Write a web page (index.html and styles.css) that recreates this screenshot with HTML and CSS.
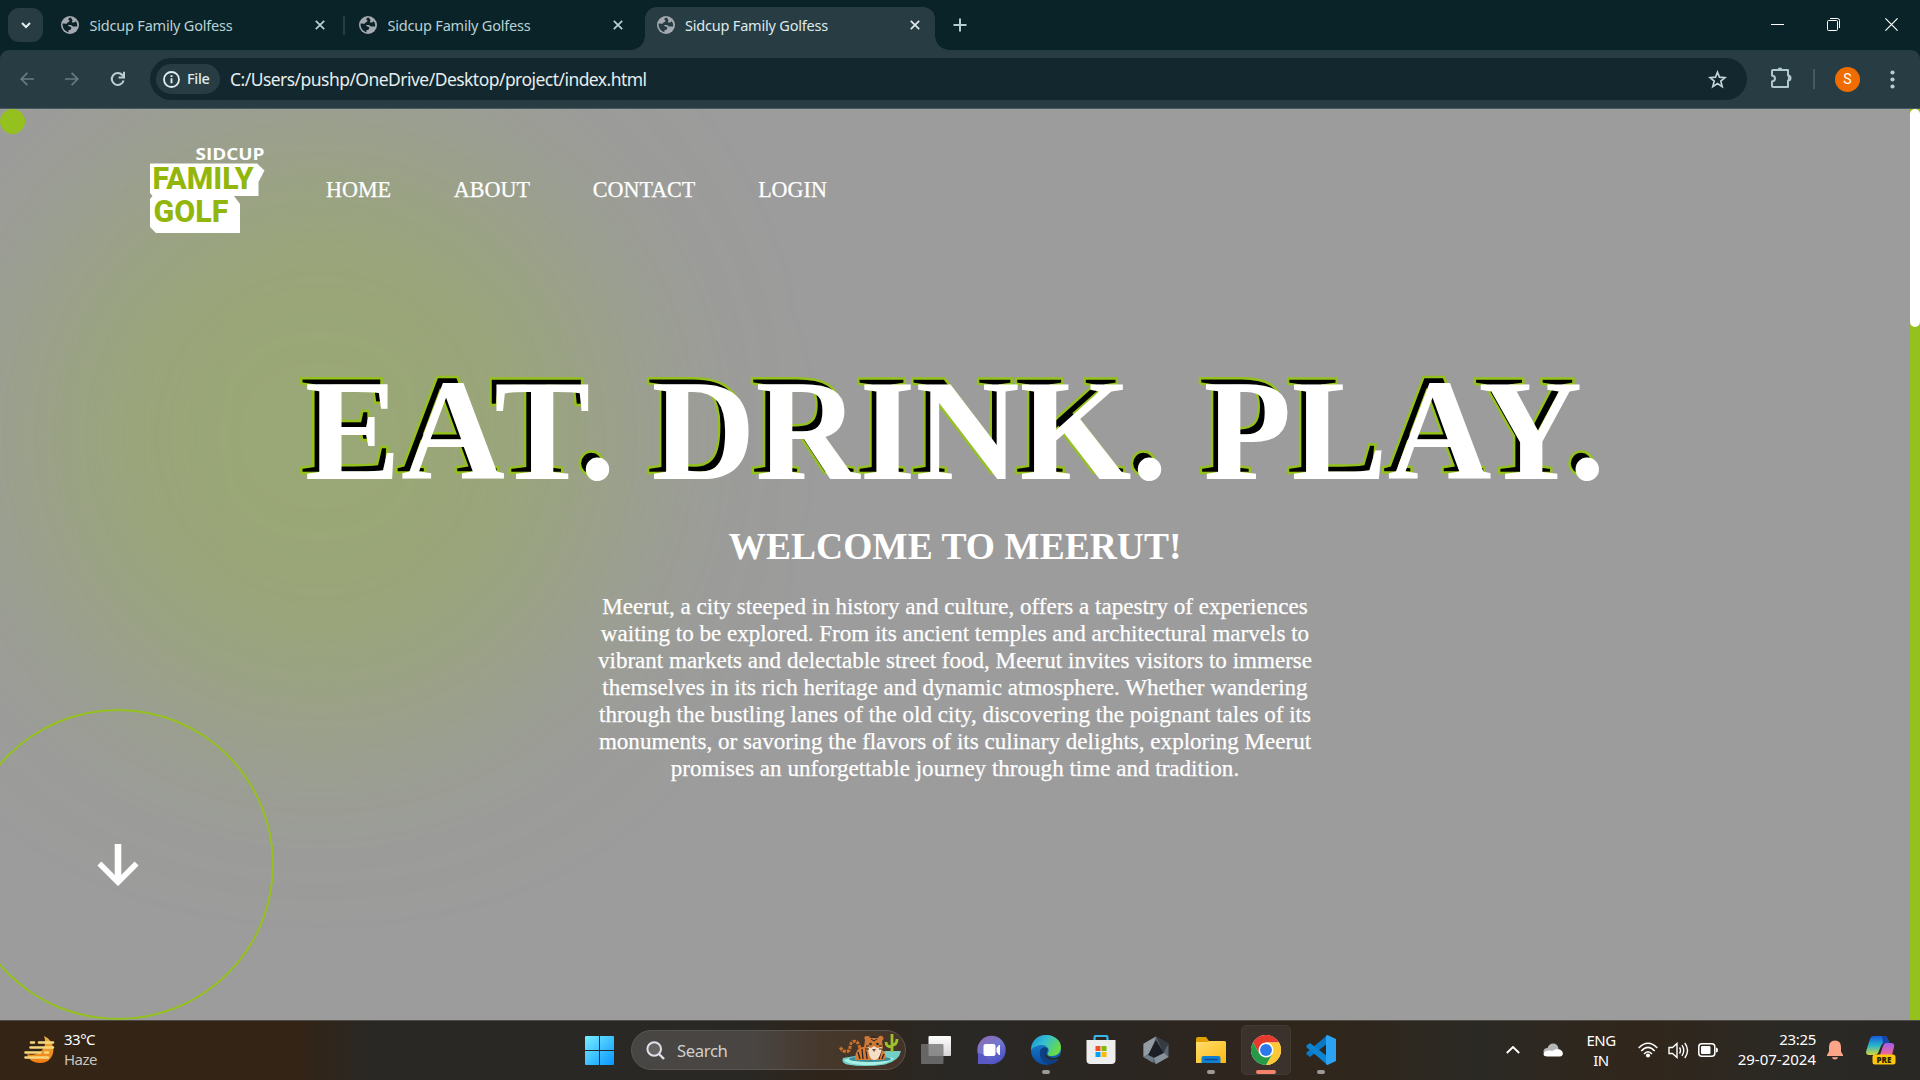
FILE: index.html
```html
<!DOCTYPE html>
<html lang="en">
<head>
<meta charset="utf-8">
<title>Sidcup Family Golfess</title>
<link rel="stylesheet" href="styles.css">
</head>
<body>
<svg class="defs" width="0" height="0">
  <symbol id="globe" viewBox="0 0 18 18"><circle cx="9" cy="9" r="9" fill="#a5a9b0"/><path d="M9.600 1.400C6.600 2.200 7 4 8.600 4.500c-.3 2-2.600 1.400-2.800 3.200L1.600 7.600C1.200 12 4 15.600 7.400 16.200l.2-2.200c1.800 0 2.800-.8 2.700-2.600-1-1.200-2.600-.8-3.500-2.200 2-.6 4.200-.4 5.200 1.300l4 .1c.7-2-.3-4.200-1.500-5.300-1 1.800-3.400 1.600-3.700.1 1.600-1 .2-2.400-1.200-4Z" fill="var(--hole)"/></symbol>
  <symbol id="cross" viewBox="0 0 10 10"><path d="M.8.8l8.400 8.400M9.200.8L.8 9.200" stroke="currentColor" stroke-width="1.700"/></symbol>
</svg>

<header class="tabstrip">
  <button class="tab-search"><svg width="10" height="7" viewBox="0 0 10 7"><path d="M1 1l4 4 4-4" fill="none" stroke="#e3f0f1" stroke-width="2"/></svg></button>
  <div class="tab"><svg class="fav" width="18" height="18"><use href="#globe"/></svg><span>Sidcup Family Golfess</span><svg class="x" width="10" height="10"><use href="#cross"/></svg></div>
  <div class="tab divided"><svg class="fav" width="18" height="18"><use href="#globe"/></svg><span>Sidcup Family Golfess</span><svg class="x" width="10" height="10"><use href="#cross"/></svg></div>
  <div class="tab active"><svg class="fav" width="18" height="18"><use href="#globe"/></svg><span>Sidcup Family Golfess</span><svg class="x" width="10" height="10"><use href="#cross"/></svg></div>
  <svg class="plus" width="14" height="14" viewBox="0 0 14 14"><path d="M7 .5v13M.5 7h13" stroke="#b5cdd2" stroke-width="2"/></svg>
  <div class="window-buttons">
    <svg width="13" height="13" viewBox="0 0 13 13"><path d="M0 6.500h13" stroke="#fff"/></svg>
    <svg width="13" height="13" viewBox="0 0 13 13" fill="none" stroke="#fff"><rect x=".5" y="2.500" width="10" height="10" rx="1"/><path d="M3 .5h7.500a2 2 0 0 1 2 2V10"/></svg>
    <svg width="13" height="13" viewBox="0 0 13 13"><path d="M.4.4l12.200 12.200M12.600.4L.4 12.600" stroke="#fff" stroke-width="1.200"/></svg>
  </div>
</header>

<div class="toolbar">
  <div class="nav-buttons">
    <svg width="14" height="14" viewBox="0 0 14 14" fill="none" stroke="#677b82" stroke-width="1.700"><path d="M14 7H1.200M7.400.8L1.200 7l6.200 6.200"/></svg>
    <svg width="14" height="14" viewBox="0 0 14 14" fill="none" stroke="#677b82" stroke-width="1.700"><path d="M0 7h12.800M6.600.8L12.800 7l-6.200 6.200"/></svg>
    <svg width="16" height="16" viewBox="0 0 16 16" fill="none" stroke="#bcd0d4" stroke-width="2"><path d="M13.600 9.500A6 6 0 1 1 12.300 4L13.800 5.500"/><path d="M14 .8v5.600H8.600"/></svg>
  </div>
  <div class="omnibox">
    <div class="chip"><svg width="17" height="17" viewBox="0 0 17 17"><circle cx="8.500" cy="8.500" r="7.500" fill="none" stroke="#e1ecee" stroke-width="1.800"/><path d="M8.500 7.300v5M8.500 4.200v1.900" stroke="#e1ecee" stroke-width="1.900"/></svg><span>File</span></div>
    <span class="url">C:/Users/pushp/OneDrive/Desktop/project/index.html</span>
    <svg class="star" width="19" height="19" viewBox="0 0 19 19"><path d="M9.500 2.200l2 5 5.500.4-4.200 3.500 1.400 5.500-4.700-3-4.700 3 1.400-5.500L2 7.600l5.500-.4Z" fill="none" stroke="#c5d3d6" stroke-width="1.700"/></svg>
  </div>
  <svg class="puzzle" width="22" height="22" viewBox="0 0 22 22"><path d="M2 4q0-1 1-1h15v5.500a2.500 2.500 0 0 1 0 5V20H3q-1 0-1-1v-4.500q3-.5 3-3t-3-3Z" fill="none" stroke="#b0c9cf" stroke-width="2" stroke-linejoin="round"/><path d="M7.500 3a2.500 2.500 0 0 1 5 0ZM18 8.500a2.500 2.500 0 0 1 0 5Z" fill="#b0c9cf"/></svg>
  <i class="rule"></i>
  <span class="avatar">S</span>
  <svg class="dots" width="5" height="19" viewBox="0 0 5 19" fill="#b5cdd2"><circle cx="2.500" cy="2.500" r="2.100"/><circle cx="2.500" cy="9.500" r="2.100"/><circle cx="2.500" cy="16.500" r="2.100"/></svg>
</div>

<main class="page">
  <div class="glow"></div>
  <div class="cursor"></div>
  <nav class="menu">
    <svg class="logo" width="116" height="88" viewBox="0 0 116 88">
      <text x="45.500" y="14" textLength="69" lengthAdjust="spacingAndGlyphs" class="logo-top">SIDCUP</text>
      <path d="M0 17.500h107l7.500 7L108.500 36v14H84l6 8v29H6L0 81V53l2.500-3-2.500-3Z" fill="#fff"/>
      <text x="2.500" y="43" textLength="101" lengthAdjust="spacingAndGlyphs" class="logo-main">FAMILY</text>
      <text x="3.500" y="75.500" textLength="75" lengthAdjust="spacingAndGlyphs" class="logo-main">GOLF</text>
    </svg>
    <a>HOME</a><a>ABOUT</a><a>CONTACT</a><a>LOGIN</a>
  </nav>
  <section class="hero">
    <h1 data-text="EAT. DRINK. PLAY.">EAT. DRINK. PLAY.</h1>
    <h2>WELCOME TO MEERUT!</h2>
    <p>Meerut, a city steeped in history and culture, offers a tapestry of experiences<br>waiting to be explored. From its ancient temples and architectural marvels to<br>vibrant markets and delectable street food, Meerut invites visitors to immerse<br>themselves in its rich heritage and dynamic atmosphere. Whether wandering<br>through the bustling lanes of the old city, discovering the poignant tales of its<br>monuments, or savoring the flavors of its culinary delights, exploring Meerut<br>promises an unforgettable journey through time and tradition.</p>
  </section>
  <div class="arrow"><svg width="42" height="42" viewBox="0 0 42 42" fill="none" stroke="#fff"><path d="M21 0v38" stroke-width="6.600"/><path d="M2.400 19.600L21 38.200l18.600-18.600" stroke-width="5.600"/></svg></div>
  <div class="scroll"><i></i></div>
</main>

<footer class="taskbar">
  <div class="weather">
    <svg width="32" height="30" viewBox="0 0 32 30"><defs><linearGradient id="sun" x2="0" y2="1"><stop stop-color="#e9b33b"/><stop offset="1" stop-color="#f37b12"/></linearGradient></defs><path d="M20 1c14 6 12 27-4 27C9 28 4 24 3 19c9 3 22-4 17-18Z" fill="url(#sun)"/><path d="M7 7.500h3M15 7.500h14M6.500 12.500H29M1.500 17.500h15M21 17.500h3M1.500 22.500H24" stroke="#f6d77d" stroke-width="2.600" stroke-linecap="round"/></svg>
    <div><b>33°C</b><span>Haze</span></div>
  </div>
  <svg class="start" width="29" height="29" viewBox="0 0 29 29"><defs><linearGradient id="win" x2="1" y2="1"><stop stop-color="#77eeff"/><stop offset="1" stop-color="#0796ff"/></linearGradient></defs><path d="M0 1q0-1 1-1h13v14H0ZM15 0h13q1 0 1 1v13H15ZM0 15h14v14H1q-1 0-1-1ZM15 15h14v13q0 1-1 1H15Z" fill="url(#win)"/></svg>
  <div class="search">
    <svg width="19" height="19" viewBox="0 0 19 19"><circle cx="8.200" cy="8" r="6.800" fill="#66625f" stroke="#dfe0ea" stroke-width="2"/><path d="M13 13l5 5" stroke="#dfe0ea" stroke-width="2.400"/></svg>
    <span>Search</span>
    <svg class="tiger" width="64" height="34" viewBox="0 0 64 34">
      <path d="M5 25q-2 5 4 6.500 18 3 38 0Q61 28 63 18L48 18Z" fill="#72cfc8"/><path d="M6 27q18-6 50-2-6 7-26 7T6 27Z" fill="#a8f0e4"/>
      <ellipse cx="32" cy="26" rx="21" ry="3" fill="#398d99"/>
      <path d="M54 19V1M54 14q-6 0-6-5M54 12q5 0 5-6" fill="none" stroke="#9cc22b" stroke-width="2.800"/>
      <path d="M22 16C20 4 12 8 12 14S5 20 2 14" fill="none" stroke="#c77331" stroke-width="3"/><path d="M22 16C20 4 12 8 12 14S5 20 2 14" fill="none" stroke="#50290f" stroke-width="3" stroke-dasharray="1 3"/>
      <path d="M17 27q0-15 13-13l16 4q4 9-2 9Z" fill="#d97c32"/><path d="M20 19l2 7M24 16l1 10M28 17l1 9M43 18l-2 8M46 21l-2 5" stroke="#2a2024" stroke-width="1.300"/>
      <path d="M27 7q-2-4 2-4 3 0 3 2h8q1-3 4-2 3 2 0 5l1 7q-3 8-9 8t-10-9Z" fill="#cd7836"/><path d="M30 14q0 12 6 13t8-13l-5 1-3-2-3 2Z" fill="#f3dfc8"/><path d="M33 6l3 2 3-2M34 4h4M28 13h3M27 16h4M44 13h-3M44 16h-3" stroke="#32231d" fill="none"/><circle cx="32.500" cy="11" r="1.300" fill="#233222"/><circle cx="39.500" cy="11" r="1.300" fill="#233222"/><path d="M34 16h4l-2 3Z" fill="#7c4a42"/>
    </svg>
  </div>
  <div class="apps">
    <div class="app"><svg width="30" height="30" viewBox="0 0 30 30"><defs><linearGradient id="tv" x2="0" y2="1"><stop stop-color="#fff"/><stop offset="1" stop-color="#d5d5d5"/></linearGradient></defs><rect x="7.500" y="1" width="22.500" height="20" rx="1" fill="url(#tv)"/><rect y="9" width="22.500" height="20" rx="1" fill="#777" fill-opacity=".8"/></svg></div>
    <div class="app"><svg width="30" height="30" viewBox="0 0 30 30"><defs><linearGradient id="chat" x2=".6" y2="1"><stop stop-color="#9567b0"/><stop offset=".5" stop-color="#7378cd"/><stop offset="1" stop-color="#4d52c5"/></linearGradient></defs><circle cx="15.500" cy="15" r="14.200" fill="url(#chat)"/><path d="M2 18v8q-1 3 1 3h12l-6-9Z" fill="#5a58c4"/><rect x="7.500" y="9" width="12" height="12" rx="2" fill="#fff"/><path d="M20.500 13l2.500-3h1v10h-1l-2.500-3Z" fill="#fff"/></svg></div>
    <div class="app run"><svg width="30" height="30" viewBox="0 0 30 30"><defs><linearGradient id="e1" x2="1" y2=".5"><stop stop-color="#168fd9"/><stop offset=".5" stop-color="#35bfd0"/><stop offset="1" stop-color="#6adb45"/></linearGradient><linearGradient id="e2" x2="0" y2="1"><stop stop-color="#1b8dd6"/><stop offset="1" stop-color="#0a4ca0"/></linearGradient></defs><circle cx="15" cy="15" r="15" fill="url(#e2)"/><path d="M0 14C1 5 7 0 15 0c9 0 15 6 15 12 0 6-4 9-9 9-4 0-5-1-4-3 2-3 0-7-5-8-5 0-10 2-12 5Z" fill="url(#e1)"/><path d="M9 16c-1 7 3 13 10 13 3 0 7-2 9-5-5 2-13 1-13-5 0-3 2-3 2-5-3-3-7-2-8 2Z" fill="#0d3f83"/><path d="M16 15c-3 4 1 8 7 8 3 0 5-2 7-4l1 4-4 1c-6 2-13 0-13-5q0-3 2-4Z" fill="#2b2926"/></svg></div>
    <div class="app"><svg width="30" height="30" viewBox="0 0 30 30"><path d="M8.500 6V2.500Q8.500 1 10 1h10q1.500 0 1.500 1.500V6" fill="none" stroke="#36b7e8" stroke-width="2.200"/><path d="M.5 5h29v20q0 4-4 4h-21q-4 0-4-4Z" fill="#eee"/><path d="M9.500 11h5v5h-5Z" fill="#f25022"/><path d="M15.500 11h5v5h-5Z" fill="#7fba00"/><path d="M9.500 17h5v5h-5Z" fill="#00a4ef"/><path d="M15.500 17h5v5h-5Z" fill="#ffb900"/></svg></div>
    <div class="app"><svg width="30" height="30" viewBox="0 0 30 30"><path d="M15 1.500l12.500 7.200V22L15 29 2.500 22V8.700Z" fill="#5b646e"/><path d="M15 1.500L2.500 8.700V22L9 18Z" fill="#939ca3"/><path d="M15 1.500l12.500 7.200-5 9Z" fill="#343b42"/><path d="M15 5L7 20l6 3 10-5Z" fill="#1c2026"/><path d="M7 20l6 3-1.500 4.500L2.500 22Z" fill="#6e7c88"/><path d="M13 23l10-5 4.500 4L15 29Z" fill="#87929b"/></svg></div>
    <div class="app run"><svg width="30" height="30" viewBox="0 0 30 30"><defs><linearGradient id="fo" x2="1" y2="1"><stop stop-color="#ffdd6d"/><stop offset="1" stop-color="#fdb913"/></linearGradient></defs><path d="M0 12V4q0-2 2-2h8l3 4h15q2 0 2 2v4Z" fill="#dfa000"/><path d="M0 7h11l3-1h14q2 0 2 2v20H0Z" fill="url(#fo)"/><path d="M5.500 28v-5q0-2 2-2h15q2 0 2 2v5Z" fill="#1180d3"/><path d="M9 24.500h12" stroke="#0a4b91" stroke-width="1.500" stroke-linecap="round"/></svg></div>
    <div class="app current"><svg width="30" height="30" viewBox="0 0 48 48"><circle cx="24" cy="24" r="24" fill="#fff"/><path d="M24 12h20.800A24 24 0 0 0 3.200 12l10.400 18Z" fill="#e53b2e"/><path d="M34.400 30L24 48A24 24 0 0 0 44.800 12H24Z" fill="#fcc934"/><path d="M13.600 30L3.200 12A24 24 0 0 0 24 48l10.400-18Z" fill="#269a47"/><circle cx="24" cy="24" r="12" fill="#fff"/><circle cx="24" cy="24" r="9.500" fill="#2b78ec"/></svg></div>
    <div class="app run"><svg width="30" height="30" viewBox="0 0 30 30"><path d="M21.500 8.500L4 22 .5 19.200v-1.700L21.500 0Z" fill="#0a78c4"/><path d="M21.500 21.500L4 8 .5 10.500v1.700L21.500 30Z" fill="#0d83d2"/><path d="M21.500 0L30 4v22l-8.500 4q-1.500 0-1.500-2V2q0-2 1.500-2Z" fill="#2ca2f2"/></svg></div>
  </div>
  <div class="tray">
    <svg class="up" width="14" height="8" viewBox="0 0 14 8"><path d="M.8 7L7 1l6.200 6" fill="none" stroke="#fff" stroke-width="1.900"/></svg>
    <svg class="cloud" width="20" height="14" viewBox="0 0 20 14"><path d="M4 12Q0 11 .5 8 1 5 4.500 5 6 .5 10 .5q4.500 0 5.500 5L13 12Z" fill="#b5b5b5"/><path d="M.5 11q1-4 6-3.500l3 .5Q13 5 17 6.500q4 2 2.500 5.500-1 1.500-3 1.500h-12q-4 0-4-2.500Z" fill="#fff"/></svg>
    <div class="lang">ENG<br>IN</div>
    <svg class="wifi" width="20" height="16" viewBox="0 0 20 16" fill="none" stroke="#fff" stroke-width="1.600"><path d="M.7 6Q10-3.400 19.300 6M3.300 9Q10 1.800 16.700 9M6 12q4-4.500 8 0"/><circle cx="10" cy="13.500" r="1.300" fill="#fff"/></svg>
    <svg class="vol" width="21" height="17" viewBox="0 0 21 17" fill="none" stroke="#fff" stroke-width="1.400"><path d="M1 5.500h3.500L9 1.500v14l-4.500-4H1ZM11.500 5.500q2 3 0 6M14 3.200q3.500 5.300 0 10.600M16.800 1q5.500 7.500 0 15"/></svg>
    <svg class="bat" width="20" height="14" viewBox="0 0 20 14"><rect x=".8" y=".8" width="16" height="12.400" rx="3" fill="none" stroke="#fff" stroke-width="1.500"/><rect x="3" y="3" width="9.500" height="8" rx="1" fill="#fff"/><path d="M18 4.500q2 0 2 2.500t-2 2.500Z" fill="#fff"/></svg>
    <div class="clock">23:25<br><span>29-07-2024</span></div>
    <svg class="bell" width="16" height="20" viewBox="0 0 16 20" fill="#fca588"><path d="M8 .5q6 0 6 6.500v4.500l2 3.500v1H0v-1l2-3.500V7Q2 .5 8 .5ZM5 17.300h6Q10.500 19.500 8 19.500T5 17.300Z"/></svg>
    <svg class="copilot" width="30" height="30" viewBox="0 0 30 30"><defs><linearGradient id="c1" x2="0" y2="1"><stop stop-color="#155be0"/><stop offset=".5" stop-color="#28b4ca"/><stop offset="1" stop-color="#d8d83a"/></linearGradient><linearGradient id="c2" x2="0" y2="1"><stop stop-color="#a45cf0"/><stop offset="1" stop-color="#f06a92"/></linearGradient></defs><path d="M8 1h10q3 0 4 3l1 4h-5q-2 0-3 3l-3 7q-1 2-4 2H3q-4 0-2.500-5L4 4Q5 1 8 1Z" fill="url(#c1)"/><path d="M20 8h5q4 0 3 4l-2 8H14l3-9q1-3 3-3Z" fill="url(#c2)"/><path d="M16 1h2q3 0 4 3l1 4h-6Z" fill="#1646a9"/><rect x="6.500" y="19.500" width="23" height="10" rx="2.500" fill="#ffc60a"/><text x="18" y="27.600" text-anchor="middle" class="pre">PRE</text></svg>
  </div>
</footer>
</body>
</html>
```
FILE: styles.css
```css
* { box-sizing: border-box; }
body { margin: 0; width: 1920px; height: 1080px; overflow: hidden; display: flex; flex-direction: column; background: #0b2428; font-family: "Noto Sans", sans-serif; }
svg { display: block; flex: none; }
.defs { position: absolute; }

/* tab strip */
.tabstrip { height: 50px; flex: none; display: flex; background: #0a2328; }
.tab-search { width: 35px; height: 34px; margin: 8px 6px 0 8px; padding: 0; border: 0; border-radius: 11px; background: #283d43; display: flex; align-items: center; justify-content: center; }
.tab { --hole: #0a2328; width: 298px; height: 50px; padding: 0 22px 0 12px; display: flex; align-items: center; color: #b9d1d5; font-size: 14.500px; letter-spacing: -.2px; position: relative; }
.tab span { margin: -1px auto 0 10.500px; white-space: nowrap; }
.tab.divided::before { content: ""; position: absolute; left: -4px; top: 16px; width: 2px; height: 19px; background: #283d43; }
.tab.active { --hole: #283d43; width: 290px; height: 43px; margin-top: 7px; padding: 0 15px 7px 11.500px; background: #283d43; border-radius: 12px 12px 0 0; color: #dfe9eb; }
.tab.active::before, .tab.active::after { content: ""; position: absolute; bottom: 0; width: 14px; height: 14px; }
.tab.active::before { left: -14px; background: radial-gradient(circle at 0 0, transparent 13.500px, #283d43 14px); }
.tab.active::after { right: -14px; background: radial-gradient(circle at 100% 0, transparent 13.500px, #283d43 14px); }
.plus { margin: 18px 0 0 18px; }
.window-buttons { margin: 18px 22px 0 auto; display: flex; gap: 44px; }
.window-buttons svg:nth-child(2) { margin: 0 1px 0 -1px; }

/* toolbar */
.toolbar { height: 59px; flex: none; display: flex; align-items: center; background: #283d43; border-radius: 9px 9px 0 0; border-bottom: 1px solid #4b5a5e; }
.nav-buttons { width: 150px; padding-left: 20px; display: flex; align-items: center; gap: 31px; }
.omnibox { width: 1597px; height: 42px; padding: 0 20px 0 6px; display: flex; align-items: center; border-radius: 21px; background: #12282e; }
.chip { width: 64px; height: 30px; padding-left: 7px; display: flex; align-items: center; gap: 7px; border-radius: 15px; background: #283d43; color: #e1ecee; font-size: 14.500px; font-weight: 500; letter-spacing: -.3px; }
.chip span { margin-top: -2px; }
.url { margin-left: 10px; color: #e6edee; font-size: 17.500px; letter-spacing: -.54px; white-space: nowrap; }
.star { margin-left: auto; }
.puzzle { margin-left: 23px; margin-bottom: 3px; }
.rule { width: 2px; height: 20px; margin-left: 21px; background: #435b62; }
.avatar { width: 25px; height: 25px; margin-left: 20px; border-radius: 50%; background: #ef6c00; color: #fff; font: 14px/25px Roboto, sans-serif; text-align: center; }
.dots { margin-left: 30px; }

/* page */
.page { height: 911px; flex: none; position: relative; overflow: hidden; isolation: isolate; background: #9c9c9c; color: #fff; font-family: "Liberation Serif", serif; }
.glow { position: absolute; z-index: -2; left: 25px; top: 32px; width: 590px; height: 590px; border-radius: 50%; background: rgba(149, 193, 30, .3); filter: blur(95px); }
.cursor { position: absolute; left: 0; top: 0; width: 25px; height: 25px; border-radius: 50%; background: #95c11e; }
.menu { height: 162px; padding-left: 150px; display: flex; align-items: center; font-size: 22.100px; -webkit-text-stroke: .25px #fff; }
.menu a { margin-right: 62.800px; }
.logo { margin-right: 60px; overflow: visible; -webkit-text-stroke: 0; }
.logo-top { font: 700 16.500px "Open Sans", sans-serif; fill: #fff; }
.logo-main { font: 800 32px Roboto, sans-serif; fill: #93b60c; }
.hero { width: 1910px; padding-top: 77px; display: flex; flex-direction: column; align-items: center; text-align: center; }
h1 { margin: 0; position: relative; font-size: 144px; line-height: 165px; font-weight: 700; white-space: nowrap; }
h1::before { content: attr(data-text); position: absolute; z-index: -1; left: -6px; top: -6px; color: #000; -webkit-text-stroke: 2.500px #95c11e; }
h2 { margin: 12px 0 0; font-size: 37.500px; line-height: 44px; font-weight: 700; }
p { margin: 24px 0 0; font-size: 23.070px; line-height: 27px; white-space: nowrap; -webkit-text-stroke: .25px #fff; }
.arrow { position: absolute; left: -38px; top: 600px; width: 312px; height: 311px; border: 2px solid #95c11e; border-radius: 50%; display: flex; align-items: center; justify-content: center; }
.scroll { position: absolute; right: 0; top: 0; width: 10px; height: 911px; background: #95c11e; }
.scroll i { display: block; height: 218px; border-radius: 5px; background: #fff; }

/* taskbar */
.taskbar { height: 60px; flex: none; display: flex; align-items: flex-start; border-top: 1px solid #4e4b46; color: #fff; font-size: 15px; background: linear-gradient(90deg, #332416 0, #332416 300px, #292825 375px, #292825 740px, #30241a 830px, #292825 960px, #2c2520 1180px, #30261b 1320px, #2b2924 1480px, #31261b 1640px, #2b2924 1780px, #292825 1920px); }
.weather { width: 585px; padding: 8px 0 0 24px; display: flex; gap: 8px; line-height: 20px; letter-spacing: -.5px; }
.weather svg { margin-top: 6px; }
.weather b, .weather span { display: block; font-weight: 400; }
.weather b { letter-spacing: -.5px; }
.weather span { color: #c9c5c0; }
.start { margin-top: 15px; }
.search { width: 275px; height: 40px; margin: 9px 0 0 17px; padding: 0 3px 0 14px; display: flex; align-items: center; border: 1px solid #5b5551; border-radius: 20px; background: linear-gradient(90deg, #484644, #494542 45%, #46382b 70%, #443328); color: #d1cfcc; font-size: 16.700px; letter-spacing: -.4px; }
.search span { margin-left: 12px; }
.tiger { margin-left: auto; }
.apps { margin: 4px 0 0 5px; display: flex; gap: 5px; }
.app { width: 50px; height: 50px; padding-top: 10px; display: flex; flex-direction: column; align-items: center; border-radius: 5px; }
.app.run::after, .app.current::after { content: ""; width: 8px; height: 4px; margin-top: 5px; border-radius: 2px; background: #9c9996; }
.app.current { padding-top: 9px; border: 1px solid #433b33; background: #3a322b; }
.app.current::after { width: 20px; background: #f5836b; }
.tray { margin-left: 160px; height: 58px; display: flex; align-items: center; line-height: 20px; }
.cloud { margin-left: 23px; }
.lang { width: 42px; margin-left: 17px; text-align: center; letter-spacing: -.5px; }
.wifi { margin-left: 16px; }
.vol { margin-left: 10px; }
.bat { margin-left: 9px; }
.clock { width: 98px; margin-top: -2px; text-align: right; letter-spacing: -.3px; }
.clock span { letter-spacing: 0; }
.bell { margin-left: 11px; }
.copilot { margin-left: 23px; }
.pre { font: 800 8px "Open Sans", sans-serif; fill: #2a2100; }
```
